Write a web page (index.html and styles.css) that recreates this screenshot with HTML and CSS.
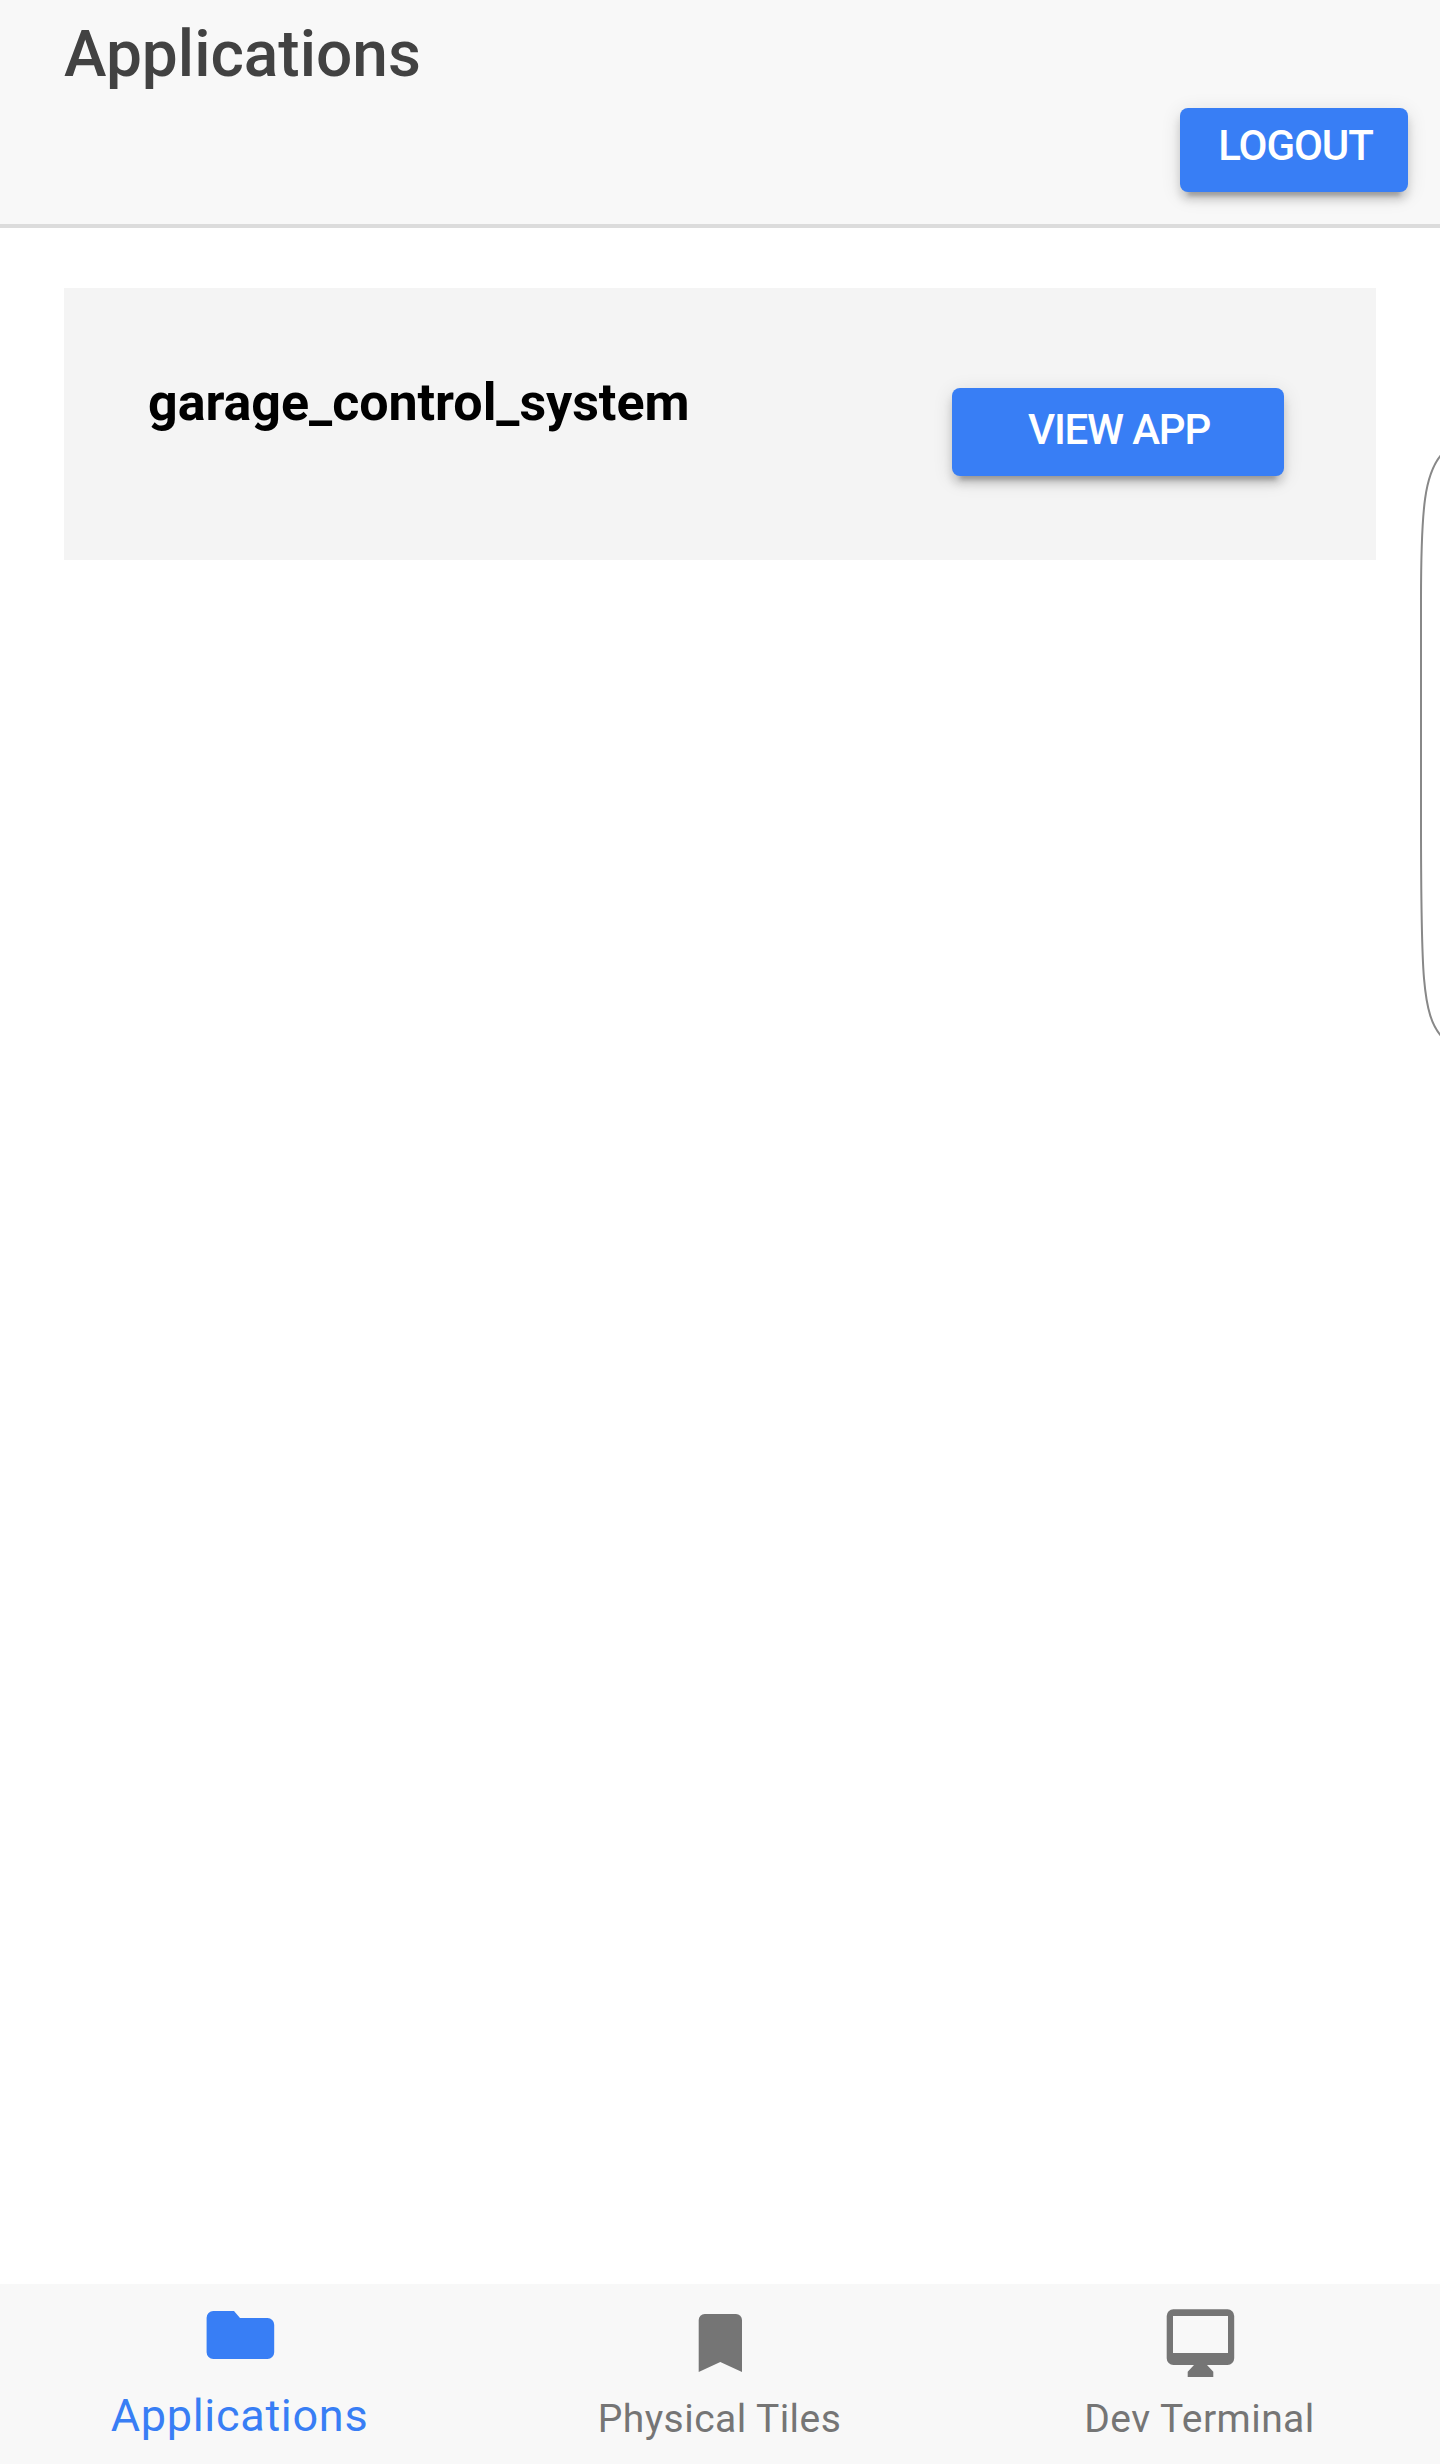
FILE: index.html
```
<!DOCTYPE html>
<html lang="en">
<head>
<meta charset="utf-8">
<title>Applications</title>
<link rel="stylesheet" href="styles.css">
</head>
<body>
<div class="app">
  <header class="header">
    <h1 class="title">Applications</h1>
    <button class="button logout">LOGOUT</button>
  </header>
  <main class="content">
    <section class="card">
      <h2 class="card-name">garage_control_system</h2>
      <button class="button view">VIEW APP</button>
    </section>
  </main>
  <nav class="tabs">
    <a class="tab active">
      <svg class="icon" viewBox="0 0 72 76"><path d="M9.3 7H30l6 7h27.5a6.7 6.7 0 0 1 6.7 6.7v27.6a6.7 6.7 0 0 1-6.7 6.7H9.3a6.7 6.7 0 0 1-6.7-6.7V13.7A6.7 6.7 0 0 1 9.3 7z"/></svg>
      <span class="label">Applications</span>
    </a>
    <a class="tab">
      <svg class="icon" viewBox="0 0 72 76"><path d="M20.7 10H52a6 6 0 0 1 6 6v52L36.3 58 14.7 68V16a6 6 0 0 1 6-6z"/></svg>
      <span class="label">Physical Tiles</span>
    </a>
    <a class="tab">
      <svg class="icon" viewBox="0 0 72 76"><path fill-rule="evenodd" d="M9.4 5.2h54.1a6.7 6.7 0 0 1 6.7 6.7v42.4a6.7 6.7 0 0 1-6.7 6.7H43l6.3 6.8V73H23.7v-5.2L30 61H9.4a6.7 6.7 0 0 1-6.7-6.7V11.9a6.7 6.7 0 0 1 6.7-6.7zM9 12v37h55V12z"/></svg>
      <span class="label">Dev Terminal</span>
    </a>
  </nav>
  <svg class="edge-handle" viewBox="0 0 24 600"><path d="M26 14C9 33 5 65 5 160V380C5 535 6 575 26 597"/></svg>
</div>
</body>
</html>
```

FILE: styles.css
```
* { box-sizing: border-box; }
body { margin: 0; font-family: Roboto, sans-serif; background: #fff; }
.app {
  position: relative;
  display: flex;
  flex-direction: column;
  height: 2464px;
  overflow: hidden;
}
.header {
  display: flex;
  flex-direction: column;
  height: 228px;
  padding: 15px 32px 0 64px;
  background: #f8f8f8;
  border-bottom: 4px solid #dcdcdc;
}
.title {
  margin: 0;
  font-size: 64px;
  font-weight: 500;
  line-height: 80px;
  color: #424242;
}
.button {
  display: block;
  margin: 0;
  padding: 0;
  border: 0;
  border-radius: 8px;
  background: #387ef5;
  color: #fff;
  font: 500 42px/75px Roboto, sans-serif;
  text-align: center;
  box-shadow: 0 8px 8px rgba(0, 0, 0, .14), 0 12px 4px -8px rgba(0, 0, 0, .2), 0 4px 20px rgba(0, 0, 0, .12);
}
.logout {
  align-self: flex-end;
  width: 228px;
  height: 84px;
  margin-top: 13px;
  padding: 0 0 9px 3px;
  letter-spacing: -1.1px;
}
.content { flex: 1; padding: 60px 64px; }
.card {
  display: flex;
  justify-content: space-between;
  align-items: flex-start;
  height: 272px;
  padding: 85px 92px 0 84px;
  background: #f4f4f4;
}
.card-name {
  margin: 0;
  font-size: 52px;
  font-weight: 700;
  line-height: 60px;
  letter-spacing: -0.05px;
  color: #000;
}
.view {
  width: 332px;
  height: 88px;
  margin-top: 15px;
  padding: 0 0 5px 2px;
  line-height: 83px;
  letter-spacing: -1.2px;
}
.tabs { display: flex; height: 180px; background: #f8f8f8; }
.tab {
  flex: 1;
  display: flex;
  flex-direction: column;
  align-items: center;
  padding-top: 20px;
  color: #757575;
}
.icon { width: 72px; height: 76px; fill: currentColor; }
.label {
  margin-top: 15px;
  padding-right: 1px;
  font-size: 39px;
  line-height: 48px;
  letter-spacing: 0.45px;
}
.tab.active { color: #387ef5; }
.tab.active .label {
  margin-top: 10px;
  font-size: 45px;
  line-height: 52px;
  letter-spacing: 0.7px;
}
/* Edge panel handle that overlays the page at the right */
.edge-handle {
  position: absolute;
  top: 440px;
  right: 0;
  width: 24px;
  height: 600px;
  fill: none;
  stroke: #888;
  stroke-width: 2;
}
```
